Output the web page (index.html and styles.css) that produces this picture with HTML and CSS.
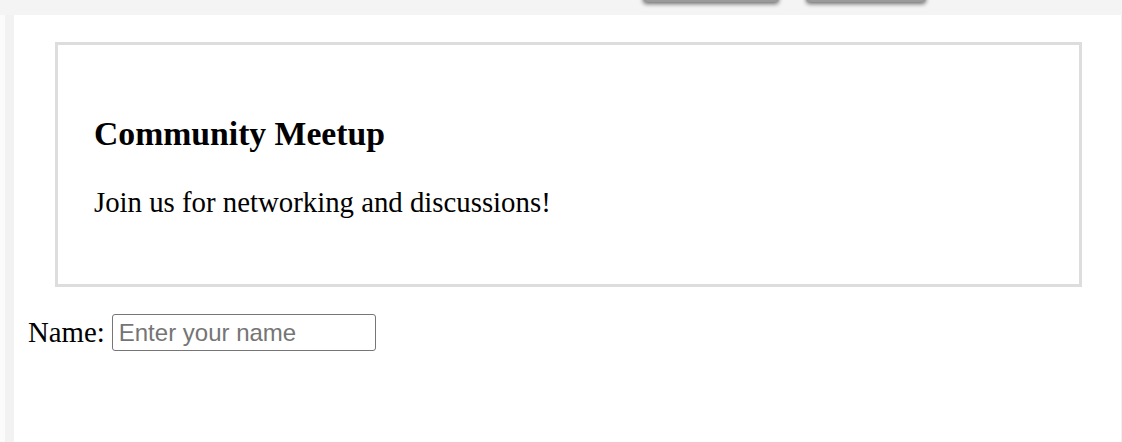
FILE: index.html
```html
<!DOCTYPE html>
<html lang="en">
<head>
<meta charset="utf-8">
<title>Community Meetup</title>
<link rel="stylesheet" href="styles.css">
</head>
<body>
<div class="topbar">
  <button class="top-btn top-btn-wide" type="button" aria-label="Action one"></button>
  <button class="top-btn top-btn-narrow" type="button" aria-label="Action two"></button>
</div>
<div class="frame">
  <div class="gutter"></div>
  <main class="page">
    <section class="card">
      <h3 class="card-title">Community Meetup</h3>
      <p class="card-text">Join us for networking and discussions!</p>
    </section>
    <div class="field">
      <label class="field-label" for="name">Name:</label>
      <input class="field-input" id="name" type="text" placeholder="Enter your name">
    </div>
  </main>
</div>
</body>
</html>
```

FILE: styles.css
```css
html, body {
  margin: 0;
  padding: 0;
  height: 100%;
}

body {
  background: #f4f4f4;
  font-family: "Liberation Serif", "Times New Roman", serif;
  color: #000;
  display: flex;
  flex-direction: column;
  overflow: hidden;
}

.topbar {
  height: 15px;
  flex: none;
  display: flex;
  align-items: flex-start;
  gap: 27px;
  padding-left: 643px;
}

.top-btn {
  margin-top: -18px;
  height: 20px;
  padding: 0;
  border: none;
  border-radius: 4px;
  background: #9a9a9a;
  box-shadow: 0 2px 4px rgba(0, 0, 0, 0.55);
}

.top-btn-wide { width: 136px; }
.top-btn-narrow { width: 120px; }

.frame {
  flex: 1;
  display: flex;
  background: #fbfbfb;
  border-right: 1px solid #f0f0f0;
}

.gutter {
  flex: none;
  width: 9px;
  margin-left: 5px;
  background: #f2f2f2;
}

.page {
  flex: 1;
  background: #fff;
  padding: 27px 0 0 14px;
}

.card {
  margin: 0 39px 0 27px;
  border: 3px solid #dddddd;
  padding: 36px;
}

.card-title {
  font-size: 33.7px;
  font-weight: bold;
  margin: 33.7px 0;
}

.card-text {
  font-size: 28.8px;
  margin: 33.7px 0 28.8px;
}

.field {
  margin-top: 27px;
  display: flex;
  align-items: center;
  gap: 7px;
}

.field-label {
  font-size: 28.8px;
}

.field-input {
  box-sizing: border-box;
  width: 264px;
  height: 37px;
  border: 1px solid #767676;
  border-radius: 3px;
  padding: 1px 6px 0;
  font-family: "Liberation Sans", Arial, sans-serif;
  font-size: 24px;
  color: #000;
  background: #fff;
}

.field-input::placeholder {
  color: #757575;
}
```
